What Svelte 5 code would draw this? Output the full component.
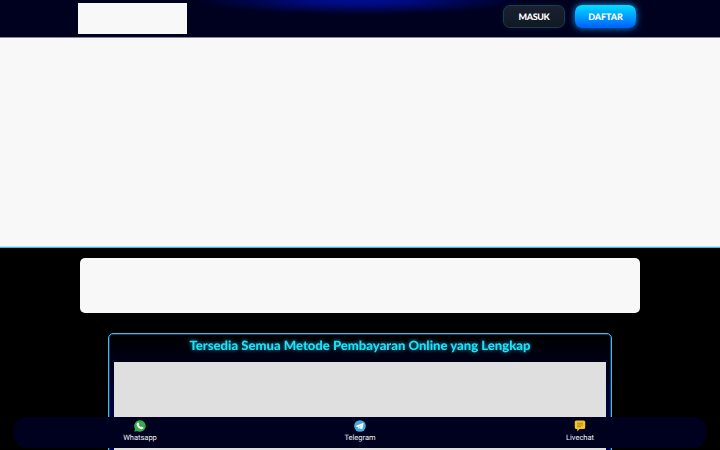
<script>
  const contacts = ['Whatsapp', 'Telegram', 'Livechat'];
</script>

<div class="page">
  <header>
    <div class="logo"></div>
    <nav>
      <button class="login"><span>MASUK</span></button>
      <button class="register"><span>DAFTAR</span></button>
    </nav>
  </header>
  <div class="hero"></div>
  <div class="banner"></div>
  <section>
    <h2><svg width="344" height="24" viewBox="0 0 344 24"><text x="1.5" y="16" textLength="341" lengthAdjust="spacingAndGlyphs">Tersedia Semua Metode Pembayaran Online yang Lengkap</text></svg></h2>
    <div class="payments"></div>
  </section>
  <footer>
    {#each contacts as name}
      <a href="#{name}">
        <svg width="12" height="12" viewBox="0 0 24 24">
          {#if name === 'Whatsapp'}
            <path fill="#36ad4c" d="M12 .5A11.5 11.5 0 1 1 6.2 22L.6 23.5l1.6-5.4A11.5 11.5 0 0 1 12 .5Z" />
            <path fill="#fff" d="M7.2 5.3c.8-.7 1.8-.6 2.2.3l1 2.4c.3.7-.2 1.3-1 2.1 1 2 2.5 3.5 4.6 4.4.7-.8 1.2-1.5 1.9-1.2l2.5 1.2c.8.4.7 1.4.1 2.3-1.5 2-4.1 1.8-6.3.8-3.1-1.3-5.3-3.7-6.6-6.6-.8-2.2-.5-4.3 1.6-5.7Z" />
          {:else if name === 'Telegram'}
            <circle cx="12" cy="12" r="11.7" fill="#43a9df" />
            <path fill="#fff" d="m4 11.7 14-5.5c.8-.3 1.3.2 1.1 1l-2.4 11c-.2.9-.8 1-1.5.5l-3.6-2.7-1.8 1.8c-.5.5-1 .3-1-.4l.2-3-4.9-1.5c-.9-.3-.9-.8-.1-1.2Z" />
            <path d="m9 14.2 7.6-5.8-5.5 6.5-1.5 2Z" fill="#a9cfe5" />
          {:else}
            <path fill="#f4c42c" d="M5 1h14c2.200 0 3.500 1.400 3.500 3.500v10c0 2.200-1.300 3.500-3.500 3.500h-8l-4.500 5v-5H5c-2.200 0-3.500-1.300-3.500-3.500v-10C1.500 2.400 2.800 1 5 1Z" />
            <path d="M6 6.500h12M6 10h12M6 13.500h8" stroke="#796317" stroke-width="1.200" />
          {/if}
        </svg>
        <span>{name}</span>
      </a>
    {/each}
  </footer>
</div>

<style>
  :global(body) { margin: 0; background: #000; overflow: hidden; }
  .page { height: 450px; overflow: hidden; position: relative; background: #000; font-family: Roboto, sans-serif; text-rendering: geometricPrecision; }
  header { height: 38px; box-sizing: border-box; padding: 3px 84px 0 77.500px; display: flex; justify-content: space-between; border-bottom: 1px solid #85869a; background: radial-gradient(ellipse 165px 15px at 50% 0, #000d91 0%, #000b80 30%, #00054a 68%, transparent 100%), #00001f; }
  .logo { width: 109px; height: 31px; background: #f8f8f8; }
  nav { display: flex; gap: 10px; padding-top: 2px; }
  button { box-sizing: border-box; height: 23px; padding: 0; border-radius: 7px; color: #fff; font: 900 9px Lato, sans-serif; text-rendering: geometricPrecision; }
  .login { width: 62px; border: 1px solid #1d3b49; background: linear-gradient(#192231, #111824); box-shadow: 0 0 4px #0a304080; }
  .register { width: 61px; border: 0; background: linear-gradient(#00dfff, #005eff); box-shadow: 0 0 7px #009bf5; }
  .login span { letter-spacing: -.4px; }
  .register span { letter-spacing: -.1px; }
  .hero { height: 209px; background: #f8f8f8; border-bottom: 1px solid #36bce9; box-shadow: inset 0 -1px #bce6f2; }
  .banner { width: 560px; height: 55px; margin: 10px auto 20px; border-radius: 5px; background: #f8f8f8; }
  section { box-sizing: border-box; width: 504px; height: 150px; margin: 0 auto; padding: 0 5px; border: 1px solid #4ab6ec; border-radius: 5px; background: linear-gradient(#000 0, #000016 28px, #000044 85px, #000060 150px); box-shadow: inset 0 0 0 1px #12395a; }
  h2 { height: 27.500px; margin: 0; display: flex; justify-content: center; font: 900 12.800px Lato, sans-serif; }
  h2 svg { overflow: visible; }
  h2 text { fill: #22e0ed; filter: drop-shadow(0 0 2px #009bd2); }
  .payments { height: 120px; background: #dfdfdf; }
  footer { box-sizing: border-box; position: absolute; left: 14px; top: 417px; width: 692px; height: 31px; padding: 0 16px; display: flex; justify-content: space-around; background: #00001f; border-radius: 12px; }
  a { width: 220px; display: flex; flex-direction: column; align-items: center; padding-top: 2.500px; color: #f3f3f7; text-decoration: none; font-size: 7.500px; line-height: 11px; }
</style>
